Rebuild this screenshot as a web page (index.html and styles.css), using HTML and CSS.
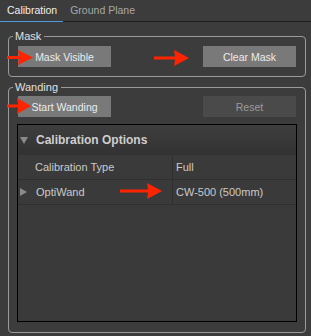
FILE: index.html
```html
<!DOCTYPE html>
<html lang="en">
<head>
  <meta charset="UTF-8" />
  <title>Calibration</title>
  <link rel="stylesheet" href="styles.css">
</head>
<body>
  <div class="tabs">
    <span class="tab active">Calibration</span>
    <span class="tab">Ground Plane</span>
  </div>

  <fieldset class="group mask">
    <legend>Mask</legend>
    <div class="buttons">
      <button class="btn">Mask Visible</button>
      <button class="btn">Clear Mask</button>
    </div>
  </fieldset>

  <fieldset class="group wanding">
    <legend>Wanding</legend>
    <div class="buttons">
      <button class="btn">Start Wanding</button>
      <button class="btn off">Reset</button>
    </div>
    <div class="props">
      <div class="props-head"><span class="tri down"></span>Calibration Options</div>
      <div class="prop">
        <div class="prop-name">Calibration Type</div>
        <div class="prop-val">Full</div>
      </div>
      <div class="prop">
        <div class="prop-name"><span class="tri right"></span>OptiWand</div>
        <div class="prop-val">CW-500 (500mm)</div>
      </div>
    </div>
  </fieldset>

  <!-- red annotation arrows -->
  <svg class="arrows" width="311" height="336" viewBox="0 0 311 336">
    <g fill="#ff2400">
      <polygon points="7,56 19,56 18,50 33,57.5 18,65 19,59 7,59" />
      <polygon points="154,56.5 175,56.5 174,50 189,58 174,66 175,59.5 154,59.5" />
      <polygon points="7,104.5 18,104.5 17,98 31,106 17,114 18,107.5 7,107.5" />
      <polygon points="120,189.5 148,189.5 147,183 162,191 147,199 148,192.5 120,192.5" />
    </g>
  </svg>
</body>
</html>
```

FILE: styles.css
```css
body {
  margin: 0;
  background: #3c3c3c;
  color: #dcdcdc;
  font-family: 'Liberation Sans', Arial, sans-serif;
  font-size: 11px;
  width: 311px;
  height: 336px;
  position: relative;
  overflow: hidden;
}

.tabs {
  display: flex;
  height: 21px;
  border-bottom: 1px solid #1f1f1f;
}
.tab {
  padding: 0 6px 0 7px;
  line-height: 21px;
  font-size: 10.5px;
  color: #a8a8a8;
}
.tab.active {
  color: #f0f0f0;
  box-shadow: inset 0 -1px 0 #4a9be0;
  height: 22px;
}

.group {
  border: 1px solid #9a9a9a;
  border-radius: 4px;
  margin: 0 5px 0 8px;
  padding: 2px 9px 9px 9px;
}
.group legend {
  margin-left: -5px;
  padding: 0 3px 0 2px;
  line-height: 16px;
  font-size: 11px;
  color: #e0e0e0;
}
.mask { margin-top: 6px; }
.wanding { margin-top: 2px; padding-top: 1px; padding-bottom: 10px; }

.buttons {
  display: flex;
  justify-content: space-between;
}
.btn {
  width: 93px;
  height: 21px;
  border: none;
  background: #797979;
  color: #ececec;
  font: inherit;
  font-size: 10.5px;
  padding: 0;
}
.btn.off { background: #4a4a4a; color: #9a9a9a; }

.props {
  margin: 7px -1px 0;
  height: 196px;
  border: 1px solid #000;
  background: #3a3a3a;
}
.props-head {
  height: 30px;
  display: flex;
  align-items: center;
  background: linear-gradient(#3e3e3e, #323232);
  font-weight: bold;
  font-size: 12px;
  color: #cfcfcf;
  padding-left: 17px;
}
.prop {
  display: flex;
  height: 24px;
  border-bottom: 1px solid #2f2f2f;
  color: #cacaca;
}
.prop-name {
  width: 137px;
  padding-left: 17px;
  border-right: 1px solid #2f2f2f;
  display: flex;
  align-items: center;
}
.prop-val {
  padding-left: 3px;
  display: flex;
  align-items: center;
}

.tri {
  width: 0;
  height: 0;
  margin-left: -15px;
  margin-right: 8px;
}
.tri.down {
  border-left: 4px solid transparent;
  border-right: 4px solid transparent;
  border-top: 7px solid #8a8a8a;
}
.tri.right {
  border-top: 4px solid transparent;
  border-bottom: 4px solid transparent;
  border-left: 7px solid #8a8a8a;
  margin-right: 9px;
}

.arrows {
  position: absolute;
  left: 0;
  top: 0;
  pointer-events: none;
}
```
